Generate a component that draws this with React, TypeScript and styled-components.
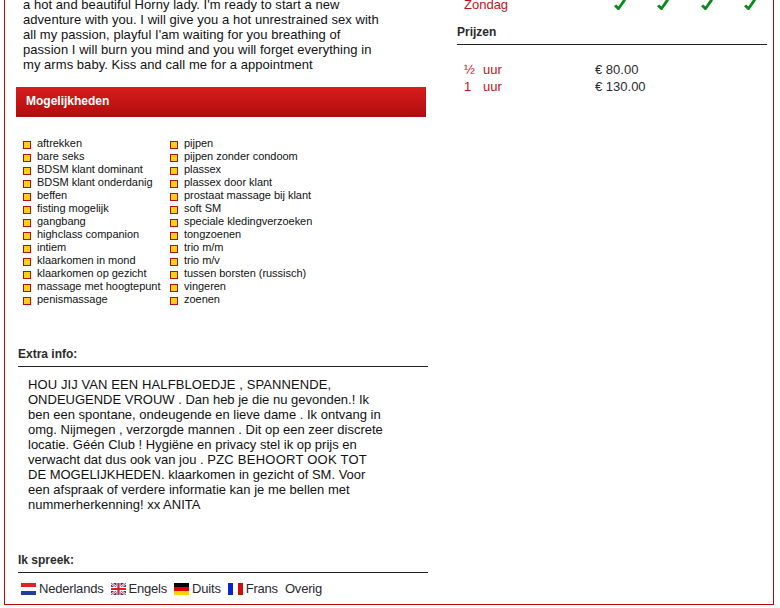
import React from "react";
import styled, { createGlobalStyle } from "styled-components";

const Global = createGlobalStyle`
  html, body { margin: 0; padding: 0; background: #fff; }
  body { font-family: "Liberation Sans", Arial, sans-serif; color: #222; overflow: hidden; }
`;
const Viewport = styled.div`
  width: 780px;
  height: 608px;
  overflow: hidden;
`;
const Frame = styled.div`
  box-sizing: border-box;
  width: 770px;
  height: 625px;
  margin: -20px 0 0 4px;
  padding: 17px 5px 0 11px;
  border: 1px solid #b80808;
  border-top: 0;
  display: flex;
  gap: 29px;
`;
const LeftCol = styled.div`
  width: 412px;
  flex: none;
`;
const RightCol = styled.div`
  width: 310px;
  flex: none;
`;
const Intro = styled.p`
  margin: 0 0 15px 7px;
  font-size: 13px;
  line-height: 15px;
  letter-spacing: 0.05px;
  color: #111;
`;
const Bar = styled.div`
  width: 410px;
  height: 30px;
  box-sizing: border-box;
  padding: 0 0 2px 10px;
  display: flex;
  align-items: center;
  font-size: 12px;
  font-weight: bold;
  color: #fff;
  background: linear-gradient(#d81c1d, #af0d0d);
`;
const Options = styled.div`
  display: flex;
  padding: 20px 0 0 7px;
  height: 230px;
  box-sizing: border-box;
`;
const OptionCol = styled.ul<{ $w: number }>`
  list-style: none;
  margin: 0;
  padding: 0;
  width: ${(p) => p.$w}px;
`;
const Option = styled.li`
  display: flex;
  height: 13px;
  font-size: 11px;
  line-height: 13px;
  letter-spacing: -0.03px;
  color: #111;
`;
const Bullet = styled.span`
  box-sizing: border-box;
  width: 8px;
  height: 8px;
  margin: 4px 6px 0 0;
  border: 1px solid #b30f0f;
  background: #ffd014;
  flex: none;
`;
const SectionTitle = styled.h3`
  margin: 0;
  box-sizing: border-box;
  height: 20px;
  font-size: 12px;
  line-height: 14px;
  font-weight: bold;
  color: #2b2b2b;
  border-bottom: 1px solid #222;
`;
const ExtraBlock = styled.div`
  margin-left: 2px;
`;
const ExtraText = styled.p`
  margin: 10px 0 0 10px;
  font-size: 13px;
  line-height: 15px;
  color: #111;
  height: 176px;
`;
const Caps = styled.span<{ $track: number }>`
  letter-spacing: ${(p) => p.$track}px;
`;
const Languages = styled.div`
  display: flex;
  align-items: center;
  margin: 8px 0 0 3px;
  font-size: 13px;
  line-height: 15px;
  letter-spacing: -0.2px;
  color: #2a2a33;
`;
const Lang = styled.span`
  display: inline-flex;
  align-items: center;
  margin-right: 7px;
`;
const Flag = styled.svg`
  width: 15px;
  height: 12px;
  margin-right: 3px;
  flex: none;
`;
const DayRow = styled.div`
  display: flex;
  align-items: flex-start;
  height: 28px;
  padding-left: 7px;
  font-size: 13px;
  line-height: 15px;
  color: #c4121a;
`;
const DayName = styled.span`
  width: 150px;
`;
const Checks = styled.span`
  display: flex;
  gap: 31.3px;
`;
const Check = styled.svg`
  width: 12px;
  height: 13px;
  flex: none;
`;
const PriceList = styled.div`
  margin: 16px 0 0 7px;
`;
const PriceRow = styled.div`
  display: flex;
  height: 17px;
  font-size: 13px;
  line-height: 17px;
`;
const Qty = styled.span`
  width: 19px;
  color: #c4121a;
`;
const Unit = styled.span`
  width: 112px;
  color: #c4121a;
`;
const Amount = styled.span`
  color: #2a2a33;
`;

const col1 = ["aftrekken","bare seks","BDSM klant dominant","BDSM klant onderdanig","beffen","fisting mogelijk","gangbang","highclass companion","intiem","klaarkomen in mond","klaarkomen op gezicht","massage met hoogtepunt","penismassage"];
const col2 = ["pijpen","pijpen zonder condoom","plassex","plassex door klant","prostaat massage bij klant","soft SM","speciale kledingverzoeken","tongzoenen","trio m/m","trio m/v","tussen borsten (russisch)","vingeren","zoenen"];

const CheckIcon = () => (
  <Check viewBox="0 0 12 13">
    <path d="M0 9.2 L2.2 7.4 L4.4 9.6 L9.8 1.5 L12 3.5 L5.2 13 L3.8 13 Z" fill="#0b8a1c" />
  </Check>
);

const App = () => (
  <Viewport>
    <Global />
    <Frame>
      <LeftCol>
        <Intro>
          a hot and beautiful Horny lady. I'm ready to start a new<br />
          adventure with you. I will give you a hot unrestrained sex with<br />
          all my passion, playful I'am waiting for you breathing of<br />
          passion I will burn you mind and you will forget everything in<br />
          my arms baby. Kiss and call me for a appointment
        </Intro>
        <Bar>Mogelijkheden</Bar>
        <Options>
          <OptionCol $w={147}>
            {col1.map((t) => (<Option key={t}><Bullet />{t}</Option>))}
          </OptionCol>
          <OptionCol $w={200}>
            {col2.map((t) => (<Option key={t}><Bullet />{t}</Option>))}
          </OptionCol>
        </Options>
        <ExtraBlock>
          <SectionTitle>Extra info:</SectionTitle>
          <ExtraText>
            <Caps $track={0.1}>HOU JIJ VAN EEN HALFBLOEDJE , SPANNENDE,</Caps><br />
            ONDEUGENDE VROUW . Dan heb je die nu gevonden.! Ik<br />
            ben een spontane, ondeugende en lieve dame . Ik ontvang in<br />
            omg. Nijmegen , verzorgde mannen . Dit op een zeer discrete<br />
            locatie. Géén Club ! Hygiëne en privacy stel ik op prijs en<br />
            verwacht dat dus ook van jou . <Caps $track={0.25}>PZC BEHOORT OOK TOT</Caps><br />
            DE MOGELIJKHEDEN. klaarkomen in gezicht of SM. Voor<br />
            een afspraak of verdere informatie kan je me bellen met<br />
            nummerherkenning! xx ANITA
          </ExtraText>
          <SectionTitle>Ik spreek:</SectionTitle>
          <Languages>
            <Lang>
              <Flag viewBox="0 0 15 12">
                <rect width="15" height="4" fill="#e0202a" />
                <rect y="4" width="15" height="4" fill="#fff" />
                <rect y="8" width="15" height="4" fill="#1f3f9c" />
              </Flag>
              Nederlands
            </Lang>
            <Lang>
              <Flag viewBox="0 0 15 12">
                <rect width="15" height="12" fill="#2a3f94" />
                <path d="M0 0 L15 12 M15 0 L0 12" stroke="#fff" strokeWidth="2.4" />
                <path d="M0 0 L15 12 M15 0 L0 12" stroke="#d8202c" strokeWidth="0.9" />
                <path d="M7.5 0 V12 M0 6 H15" stroke="#fff" strokeWidth="4" />
                <path d="M7.5 0 V12 M0 6 H15" stroke="#d8202c" strokeWidth="2.2" />
              </Flag>
              Engels
            </Lang>
            <Lang>
              <Flag viewBox="0 0 15 12">
                <rect width="15" height="4" fill="#000" />
                <rect y="4" width="15" height="4" fill="#e00000" />
                <rect y="8" width="15" height="4" fill="#ffd500" />
              </Flag>
              Duits
            </Lang>
            <Lang>
              <Flag viewBox="0 0 15 12">
                <rect width="5" height="12" fill="#0a24d0" />
                <rect x="5" width="5" height="12" fill="#fff" />
                <rect x="10" width="5" height="12" fill="#d00c0c" />
              </Flag>
              Frans
            </Lang>
            <span>Overig</span>
          </Languages>
        </ExtraBlock>
      </LeftCol>
      <RightCol>
        <DayRow>
          <DayName>Zondag</DayName>
          <Checks>
            <CheckIcon /><CheckIcon /><CheckIcon /><CheckIcon />
          </Checks>
        </DayRow>
        <SectionTitle>Prijzen</SectionTitle>
        <PriceList>
          <PriceRow><Qty>½</Qty><Unit>uur</Unit><Amount>€ 80.00</Amount></PriceRow>
          <PriceRow><Qty>1</Qty><Unit>uur</Unit><Amount>€ 130.00</Amount></PriceRow>
        </PriceList>
      </RightCol>
    </Frame>
  </Viewport>
);

export default App;
